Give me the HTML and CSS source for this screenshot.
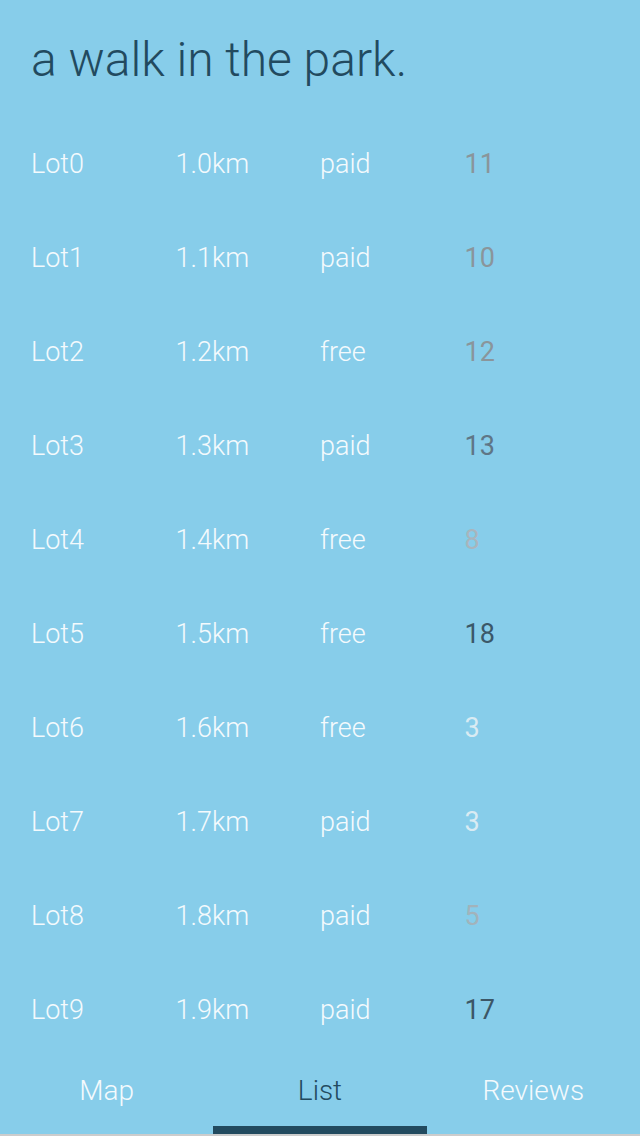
FILE: index.html
```html
<!DOCTYPE html>
<html lang="en">
<head>
    <meta charset="UTF-8">
    <meta name="viewport" content="width=device-width, initial-scale=1.0">
    <title>a walk in the park.</title>
    <link rel="stylesheet" href="styles.css">
</head>
<body>
    <div class="app">
        <h1 class="title">a walk in the park.</h1>
        <div class="list">
            <div class="row"><span>Lot0</span><span>1.0km</span><span>paid</span><span class="count c11">11</span></div>
            <div class="row"><span>Lot1</span><span>1.1km</span><span>paid</span><span class="count c10">10</span></div>
            <div class="row"><span>Lot2</span><span>1.2km</span><span>free</span><span class="count c12">12</span></div>
            <div class="row"><span>Lot3</span><span>1.3km</span><span>paid</span><span class="count c13">13</span></div>
            <div class="row"><span>Lot4</span><span>1.4km</span><span>free</span><span class="count c8">8</span></div>
            <div class="row"><span>Lot5</span><span>1.5km</span><span>free</span><span class="count c18">18</span></div>
            <div class="row"><span>Lot6</span><span>1.6km</span><span>free</span><span class="count c3">3</span></div>
            <div class="row"><span>Lot7</span><span>1.7km</span><span>paid</span><span class="count c3">3</span></div>
            <div class="row"><span>Lot8</span><span>1.8km</span><span>paid</span><span class="count c5">5</span></div>
            <div class="row"><span>Lot9</span><span>1.9km</span><span>paid</span><span class="count c17">17</span></div>
        </div>
        <div class="tabs">
            <a>Map</a>
            <a class="active">List</a>
            <a>Reviews</a>
        </div>
    </div>
</body>
</html>
```
FILE: styles.css
```css
* {
    margin: 0;
    padding: 0;
    box-sizing: border-box;
}

body {
    background: #cccccc;
    font-family: Roboto, "Liberation Sans", sans-serif;
    font-weight: 300;
}

.app {
    width: 640px;
    height: 1134px;
    background: #87cdea;
    display: flex;
    flex-direction: column;
}

.title {
    height: 117px;
    padding: 30px 31px 0;
    font-size: 48px;
    font-weight: 300;
    line-height: 60px;
    color: #224a5f;
}

.list {
    padding: 0 31px;
}
.row {
    height: 94px;
    display: grid;
    grid-template-columns: repeat(4, 1fr);
    align-items: center;
    font-size: 27px;
    color: #f4fafd;
}

.count {
    font-weight: 400;
}
.c3 { color: #d9ebf3; }
.c5 { color: #a2b3bb; }
.c8 { color: #a9b5bd; }
.c10, .c11, .c12 { color: #8a959b; }
.c13 { color: #5f7686; }
.c17 { color: #3c5666; }
.c18 { color: #3b5869; }

.tabs {
    flex-grow: 1;
    display: flex;
}
.tabs a {
    flex: 1;
    text-align: center;
    font-size: 28px;
    line-height: 68px;
    color: #f4fafd;
    border-bottom: 8px solid transparent;
}
.tabs a.active {
    color: #224a5f;
    border-bottom-color: #224a5f;
}
```
